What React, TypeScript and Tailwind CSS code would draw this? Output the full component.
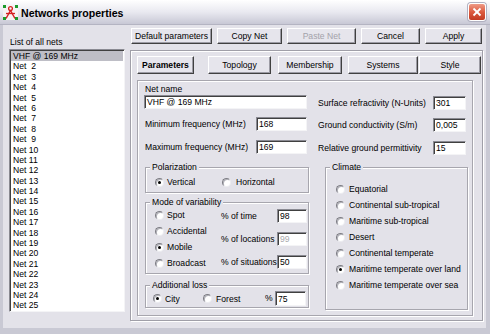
import React from "react";

const BG = "bg-[#e3e2e9]";

function RaisedButton({
  className,
  children,
  disabled,
  bold,
}: {
  className: string;
  children: React.ReactNode;
  disabled?: boolean;
  bold?: boolean;
}) {
  return (
    <div
      className={
        "flex items-center justify-center whitespace-nowrap bg-[#e6e5ec] border border-t-white border-l-white border-r-[#404040] border-b-[#404040] shadow-[inset_-1px_-1px_0_#9c9ba4] leading-[12px] " +
        (disabled ? "text-[#a3a2aa] " : "text-black ") +
        (bold ? "font-bold " : "") +
        className
      }
    >
      {children}
    </div>
  );
}

function TextBox({
  className,
  value,
  disabled,
}: {
  className: string;
  value: string;
  disabled?: boolean;
}) {
  return (
    <div
      className={
        "shrink-0 bg-white border border-t-[#8a8a92] border-l-[#8a8a92] border-r-[#f4f4f6] border-b-[#f4f4f6] shadow-[inset_1px_1px_0_#404040] pl-[2px] flex items-center leading-[12px] whitespace-nowrap " +
        (disabled ? "text-[#a9a9ae] " : "text-black ") +
        className
      }
    >
      {value}
    </div>
  );
}

function Radio({ checked }: { checked?: boolean }) {
  return (
    <span className="relative inline-block shrink-0 w-[9px] h-[9px] rounded-full bg-white border border-t-[#7c7c84] border-l-[#7c7c84] border-r-[#ececf0] border-b-[#ececf0] shadow-[inset_1px_1px_0_#b0b0b8]">
      {checked && (
        <span className="absolute left-[2px] top-[2px] w-[3px] h-[3px] rounded-full bg-black" />
      )}
    </span>
  );
}

function RadioOption({
  label,
  checked,
  className,
}: {
  label: string;
  checked?: boolean;
  className?: string;
}) {
  return (
    <div className={"flex items-center gap-[3px] " + (className ?? "")}>
      <Radio checked={checked} />
      <span className="leading-[10px] whitespace-nowrap">{label}</span>
    </div>
  );
}

function Group({
  title,
  className,
  children,
}: {
  title: string;
  className: string;
  children: React.ReactNode;
}) {
  return (
    <div
      className={
        "relative shrink-0 border border-[#a7a6ae] shadow-[1px_1px_0_#ffffff,inset_1px_1px_0_#ffffff] " +
        className
      }
    >
      <span className={"absolute left-[4px] -top-[6px] px-[2px] leading-[11px] whitespace-nowrap " + BG}>
        {title}
      </span>
      {children}
    </div>
  );
}

function TitleIcon() {
  return (
    <svg width="15" height="15" viewBox="0 0 15 15" className="shrink-0">
      <rect x="0" y="0" width="15" height="15" fill="#f6f2f2" />
      <circle cx="7.5" cy="3.6" r="1.9" fill="none" stroke="#d42020" strokeWidth="1.3" />
      <line x1="7.5" y1="5.5" x2="3" y2="13.5" stroke="#d42020" strokeWidth="1.5" />
      <line x1="7.5" y1="5.5" x2="12" y2="13.5" stroke="#d42020" strokeWidth="1.5" />
      <line x1="3" y1="8.5" x2="12" y2="8.5" stroke="#d42020" strokeWidth="1.3" />
      <rect x="0" y="0" width="3" height="3" fill="#1c9a2c" />
      <rect x="12" y="0" width="3" height="3" fill="#1c9a2c" />
      <rect x="0" y="12" width="3" height="3" fill="#1c9a2c" />
      <rect x="12" y="12" width="3" height="3" fill="#1c9a2c" />
    </svg>
  );
}

function CloseButton() {
  return (
    <div className="w-[18px] h-[18px] rounded-[3px] border border-white bg-linear-to-b from-[#ee9a86] via-[#dc5a3f] to-[#c23a22] flex items-center justify-center shadow-[0_0_0_1px_#b0b0c0]">
      <svg width="10" height="10" viewBox="0 0 10 10">
        <line x1="1.5" y1="1.5" x2="8.5" y2="8.5" stroke="white" strokeWidth="1.8" />
        <line x1="8.5" y1="1.5" x2="1.5" y2="8.5" stroke="white" strokeWidth="1.8" />
      </svg>
    </div>
  );
}

const nets = [
  "VHF @ 169 MHz",
  ...Array.from({ length: 24 }, (_, i) => (i + 2 < 10 ? `Net  ${i + 2}` : `Net ${i + 2}`)),
];

export default function App() {
  return (
    <div
      className={
        "w-[490px] h-[334px] overflow-hidden flex flex-col text-black text-[8.6px] font-['Liberation_Sans',Arial,sans-serif] " +
        BG
      }
    >
      {/* Title bar */}
      <div className="h-[25px] shrink-0 flex items-center pl-[3px] pr-[4px] bg-linear-to-b from-[#ffffff] via-[#e9e9f0] to-[#c8c8d5] border-b border-[#b4b4c2]">
        <TitleIcon />
        <span className="ml-[3px] pt-[2px] font-bold text-[10.6px] leading-[14px]">
          Networks properties
        </span>
        <div className="flex-1" />
        <CloseButton />
      </div>

      {/* Body */}
      <div className="flex flex-1 border-l-[3px] border-r-[4px] border-b-[6px] border-l-[#c9c9d4] border-r-[#c9c9d4] border-b-[#c9c9d4]">
        {/* Left column */}
        <div className="w-[124px] shrink-0 pl-[6px] flex flex-col">
          <div className="mt-[12px] leading-[10px] pl-[1px]">List of all nets</div>
          <div className="mt-[2px] w-[116px] h-[263px] bg-white border border-t-[#8a8a92] border-l-[#8a8a92] border-r-[#f4f4f6] border-b-[#f4f4f6] shadow-[inset_1px_1px_0_#404040] pt-[1px] pl-[1px] overflow-hidden">
            {nets.map((n, i) => (
              <div
                key={n}
                className={
                  "h-[10.4px] leading-[10.4px] pl-[2px] whitespace-pre " +
                  (i === 0 ? "bg-[#bebec6] mr-[1px]" : "")
                }
              >
                {n}
              </div>
            ))}
          </div>
        </div>

        {/* Right column */}
        <div className="flex flex-col ml-[3px]">
          <div className="flex mt-[3px] ml-[1px] gap-[5px]">
            <RaisedButton className="w-[81px] h-[16px]">Default parameters</RaisedButton>
            <RaisedButton className="w-[65px] h-[16px]">Copy Net</RaisedButton>
            <RaisedButton className="w-[69px] h-[16px]" disabled>
              Paste Net
            </RaisedButton>
            <RaisedButton className="w-[59px] h-[16px]">Cancel</RaisedButton>
            <RaisedButton className="w-[57px] h-[16px]">Apply</RaisedButton>
          </div>

          {/* Outer panel */}
          <div className="mt-[6px] w-[353px] h-[271px] border border-[#a09fa8] shadow-[1px_1px_0_#ffffff,inset_1px_1px_0_#ffffff]">
            <div className="flex mt-[5px] ml-[6px]">
              <RaisedButton className="w-[57px] h-[18px]" bold>
                Parameters
              </RaisedButton>
              <RaisedButton className="ml-[14px] w-[63px] h-[18px]">Topology</RaisedButton>
              <RaisedButton className="ml-[7px] w-[64px] h-[18px]">Membership</RaisedButton>
              <RaisedButton className="ml-[6px] w-[70px] h-[18px]">Systems</RaisedButton>
              <RaisedButton className="ml-[1px] w-[62px] h-[18px]">Style</RaisedButton>
            </div>

            {/* Inner panel */}
            <div className="mt-[6px] ml-[6px] w-[336px] h-[236px] border border-[#a7a6ae] shadow-[1px_1px_0_#ffffff,inset_1px_1px_0_#ffffff] flex">
              {/* Left fields */}
              <div className="ml-[6px] w-[165px] shrink-0 flex flex-col">
                <div className="mt-[3px] leading-[10px] pl-[1px]">Net name</div>
                <TextBox className="mt-[1px] w-[163px] h-[14px]" value="VHF @ 169 MHz" />
                <div className="mt-[8px] w-[163px] h-[14px] flex items-center justify-between">
                  <span className="pl-[1px] whitespace-nowrap">Minimum frequency (MHz)</span>
                  <TextBox className="w-[51px] h-[14px]" value="168" />
                </div>
                <div className="mt-[9px] w-[163px] h-[14px] flex items-center justify-between">
                  <span className="pl-[1px] whitespace-nowrap">Maximum frequency (MHz)</span>
                  <TextBox className="w-[51px] h-[14px]" value="169" />
                </div>

                <Group title="Polarization" className="mt-[13px] ml-[1px] w-[164px] h-[26px]">
                  <div className="flex pt-[9px] pl-[9px]">
                    <RadioOption label="Vertical" checked className="w-[67px]" />
                    <RadioOption label="Horizontal" className="gap-[5px]" />
                  </div>
                </Group>

                <Group title="Mode of variability" className="mt-[9px] ml-[1px] w-[164px] h-[72px]">
                  <div className="flex">
                    <div className="w-[75px] pl-[9px] pt-[4px] flex flex-col">
                      <RadioOption label="Spot" className="h-[16px]" />
                      <RadioOption label="Accidental" className="h-[16px]" />
                      <RadioOption label="Mobile" checked className="h-[16px]" />
                      <RadioOption label="Broadcast" className="h-[16px]" />
                    </div>
                    <div className="w-[86px] pt-[6px] flex flex-col gap-[9px]">
                      <div className="h-[14px] flex items-center justify-between">
                        <span className="whitespace-nowrap">% of time</span>
                        <TextBox className="w-[30px] h-[14px]" value="98" />
                      </div>
                      <div className="h-[14px] flex items-center justify-between">
                        <span className="whitespace-nowrap">% of locations</span>
                        <TextBox className="w-[30px] h-[14px]" value="99" disabled />
                      </div>
                      <div className="h-[14px] flex items-center justify-between">
                        <span className="whitespace-nowrap">% of situations</span>
                        <TextBox className="w-[30px] h-[14px]" value="50" />
                      </div>
                    </div>
                  </div>
                </Group>

                <Group title="Additional loss" className="mt-[11px] ml-[1px] w-[164px] h-[23px]">
                  <div className="flex items-center h-[15px] mt-[5px] pl-[7px]">
                    <RadioOption label="City" checked className="w-[50px]" />
                    <RadioOption label="Forest" className="w-[62px] gap-[4px]" />
                    <span className="w-[10px]">%</span>
                    <TextBox className="w-[31px] h-[15px]" value="75" />
                  </div>
                </Group>
              </div>

              {/* Right fields */}
              <div className="ml-[9px] w-[150px] shrink-0 flex flex-col">
                <div className="mt-[15px] h-[14px] pr-[2px] flex items-center justify-between">
                  <span className="whitespace-nowrap">Surface refractivity (N-Units)</span>
                  <TextBox className="w-[33px] h-[14px]" value="301" />
                </div>
                <div className="mt-[8px] h-[14px] pr-[2px] flex items-center justify-between">
                  <span className="whitespace-nowrap">Ground conductivity (S/m)</span>
                  <TextBox className="w-[33px] h-[14px]" value="0,005" />
                </div>
                <div className="mt-[9px] h-[14px] pr-[2px] flex items-center justify-between">
                  <span className="whitespace-nowrap">Relative ground permittivity</span>
                  <TextBox className="w-[33px] h-[14px]" value="15" />
                </div>

                <Group title="Climate" className="mt-[12px] ml-[7px] w-[143px] h-[143px]">
                  <div className="pt-[13px] pl-[10px] flex flex-col">
                    <RadioOption label="Equatorial" className="h-[16px] gap-[4px]" />
                    <RadioOption label="Continental sub-tropical" className="h-[16px] gap-[4px]" />
                    <RadioOption label="Maritime sub-tropical" className="h-[16px] gap-[4px]" />
                    <RadioOption label="Desert" className="h-[16px] gap-[4px]" />
                    <RadioOption label="Continental temperate" className="h-[16px] gap-[4px]" />
                    <RadioOption label="Maritime temperate over land" checked className="h-[16px] gap-[4px]" />
                    <RadioOption label="Maritime temperate over sea" className="h-[16px] gap-[4px]" />
                  </div>
                </Group>
              </div>
            </div>
          </div>
        </div>
      </div>
    </div>
  );
}
